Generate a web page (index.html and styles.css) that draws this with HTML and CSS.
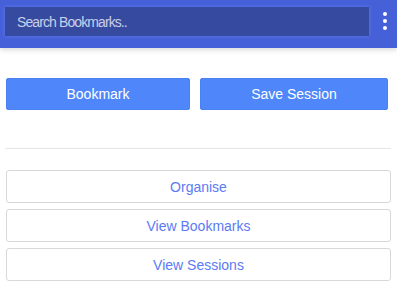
FILE: index.html
```html
<!DOCTYPE html>
<html lang="en">
<head>
  <meta charset="UTF-8" />
  <meta name="viewport" content="width=device-width, initial-scale=1.0" />
  <title>Bookmarks</title>
  <link rel="stylesheet" href="styles.css">
</head>
<body>
  <header class="topbar">
    <input class="search" type="text" placeholder="Search Bookmarks.." />
    <button class="menu" aria-label="Menu">
      <span></span><span></span><span></span>
    </button>
  </header>

  <main class="content">
    <div class="actions">
      <button class="btn-primary">Bookmark</button>
      <button class="btn-primary">Save Session</button>
    </div>

    <hr class="divider" />

    <div class="links">
      <button class="btn-outline">Organise</button>
      <button class="btn-outline">View Bookmarks</button>
      <button class="btn-outline">View Sessions</button>
    </div>
  </main>
</body>
</html>
```

FILE: styles.css
```css
* {
  margin: 0;
  padding: 0;
  box-sizing: border-box;
}

body {
  font-family: 'Liberation Sans', Arial, sans-serif;
  background: #fff;
  width: 397px;
}

.topbar {
  height: 48px;
  background: #4660d8;
  display: flex;
  align-items: flex-start;
  padding: 7px 0 0 5px;
  box-shadow: 0 2px 5px rgba(0,0,0,0.15);
}

.search {
  width: 364px;
  height: 29px;
  border: none;
  outline: none;
  background: #364b9f;
  color: #fff;
  font-family: inherit;
  font-size: 14px;
  letter-spacing: -0.9px;
  padding-left: 12px;
  box-shadow: 0 0 4px rgba(120,150,255,0.5);
}

.search::placeholder {
  color: #c9cfec;
}

.menu {
  background: none;
  border: none;
  display: flex;
  flex-direction: column;
  gap: 3px;
  margin: 5px 0 0 14px;
  cursor: pointer;
}

.menu span {
  width: 4px;
  height: 4px;
  border-radius: 50%;
  background: #fff;
}

.content {
  padding: 30px 5px 0 5px;
}

.actions {
  display: flex;
  gap: 10px;
  padding: 0 4px 0 1px;
}

.btn-primary {
  flex: 1;
  height: 32px;
  background: #4f87fa;
  border: 1px solid #4a80ef;
  border-radius: 2px;
  color: #fff;
  font-family: inherit;
  font-size: 14px;
}

.btn-primary:last-child {
  flex: 0 0 188px;
}

.divider {
  border: none;
  border-top: 1px solid #e6e6e6;
  margin: 38px 1px 0 0;
}

.links {
  display: flex;
  flex-direction: column;
  gap: 6px;
  margin-top: 21px;
  padding: 0 1px;
}

.btn-outline {
  height: 33px;
  background: #fff;
  border: 1px solid #d8d8d8;
  border-radius: 3px;
  color: #5b7bf5;
  font-family: inherit;
  font-size: 14px;
}
```
